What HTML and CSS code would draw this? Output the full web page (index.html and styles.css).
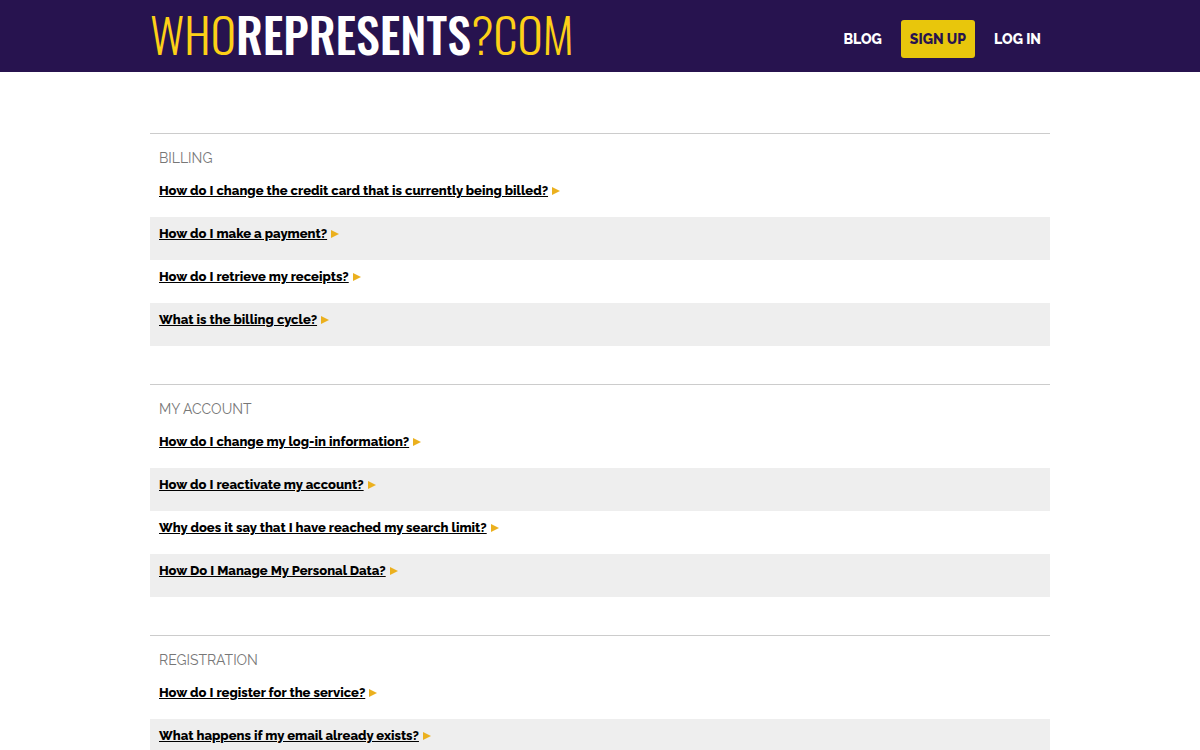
FILE: index.html
```html
<!DOCTYPE html>
<html lang="en">
  <head>
    <meta charset="UTF-8" />
    <meta name="viewport" content="width=device-width, initial-scale=1.0" />
    <title>WhoRepresents?com - FAQ</title>
    <link rel="stylesheet" href="styles.css">
  </head>
  <body>
    <header class="header">
      <div class="container header-inner">
        <a class="logo" href="#">WHO<strong>REPRESENTS</strong>?COM</a>
        <nav class="nav">
          <a href="#">BLOG</a>
          <a class="signup" href="#">SIGN UP</a>
          <a href="#">LOG IN</a>
        </nav>
      </div>
    </header>
    <main class="container">
      <section class="faq">
        <h2>BILLING</h2>
        <ul>
          <li><a href="#">How do I change the credit card that is currently being billed?</a></li>
          <li><a href="#">How do I make a payment?</a></li>
          <li><a href="#">How do I retrieve my receipts?</a></li>
          <li><a href="#">What is the billing cycle?</a></li>
        </ul>
      </section>
      <section class="faq">
        <h2>MY ACCOUNT</h2>
        <ul>
          <li><a href="#">How do I change my log-in information?</a></li>
          <li><a href="#">How do I reactivate my account?</a></li>
          <li><a href="#">Why does it say that I have reached my search limit?</a></li>
          <li><a href="#">How Do I Manage My Personal Data?</a></li>
        </ul>
      </section>
      <section class="faq">
        <h2>REGISTRATION</h2>
        <ul>
          <li><a href="#">How do I register for the service?</a></li>
          <li><a href="#">What happens if my email already exists?</a></li>
        </ul>
      </section>
    </main>
  </body>
</html>
```
FILE: styles.css
```css
* {
  box-sizing: border-box;
}

body {
  margin: 0;
  background-color: #fff;
  color: #000;
  font-family: Raleway, Lato, sans-serif;
  font-size: 14px;
  line-height: 20px;
}

.container {
  width: 100%;
  max-width: 900px;
  margin: 0 auto;
}

/* header */
.header {
  background-color: #27134f;
}

.header-inner {
  display: flex;
  justify-content: space-between;
  align-items: center;
  min-height: 72px;
}

.logo {
  padding-bottom: 4px;
  color: #fdd017;
  font-family: Oswald, "Open Sans Condensed", "Roboto Condensed", "Liberation Sans Narrow", sans-serif;
  font-size: 48px;
  font-weight: 300;
  line-height: 68px;
  text-decoration: none;
}

.logo strong {
  color: #fff;
  font-weight: 500;
}

.nav {
  display: flex;
  gap: 10px;
  margin-top: 5px;
}

.nav a {
  padding: 9px;
  border-radius: 3px;
  color: #fff;
  font-weight: 800;
  text-decoration: none;
}

.nav .signup {
  background-color: #e8c60c;
  color: #27134f;
}

/* question lists */
main {
  padding-top: 61px;
}

.faq {
  margin-bottom: 38px;
  border-top: 1px solid #ccc;
}

.faq h2 {
  margin: 0;
  padding: 14px 9px 6px;
  color: #777;
  font-size: 14px;
  font-weight: 400;
}

.faq ul {
  margin: 0;
  padding: 0;
  list-style: none;
}

.faq li {
  display: flex;
  align-items: center;
  gap: 4px;
  padding: 7px 9px 16px;
}

.faq li:nth-child(even) {
  background-color: #eee;
}

.faq li a {
  color: #000;
  font-size: 13px;
  font-weight: 800;
}

/* arrow after each question */
.faq li::after {
  content: "";
  border-left: 8px solid #ebb01e;
  border-top: 4px solid transparent;
  border-bottom: 4px solid transparent;
}
```
